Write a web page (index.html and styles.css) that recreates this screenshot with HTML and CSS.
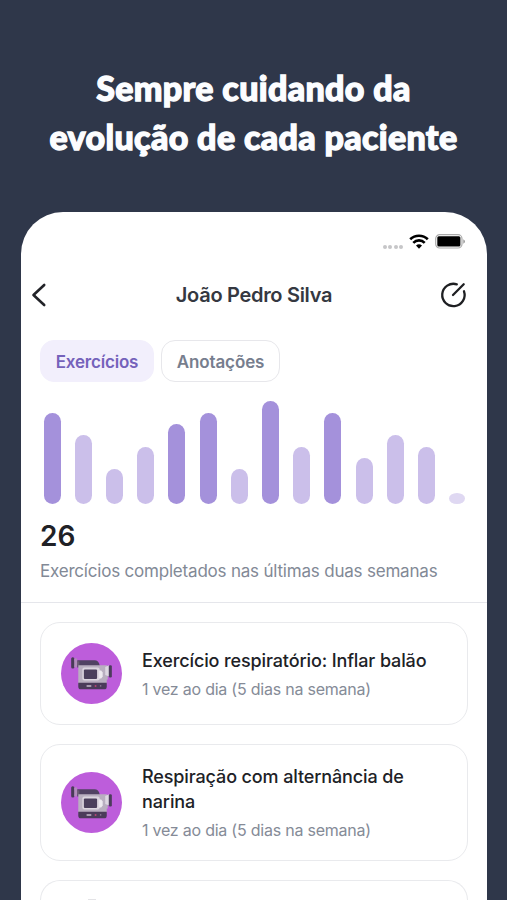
FILE: index.html
```html
<!DOCTYPE html>
<html lang="pt-BR">
<head>
<meta charset="utf-8">
<title>João Pedro Silva</title>
<link rel="stylesheet" href="styles.css">
</head>
<body>
<svg class="defs" aria-hidden="true">
  <symbol id="camera" viewBox="0 0 60 60">
    <circle cx="30" cy="30" r="30" fill="#bd5ddb"/>
    <path d="M16 17h17q4 0 5 5v2H16z" fill="#514263"/>
    <rect x="12" y="18" width="6" height="4" fill="#6c5b75"/>
    <rect x="10" y="14" width="3.200" height="11" rx="1.500" fill="#493b58"/>
    <rect x="13" y="15" width="2.800" height="9" rx="1" fill="#b18bbb"/>
    <path d="M17 22h27q2 0 2 1v13h-1v4H17z" fill="#b9afc0"/>
    <rect x="21" y="24" width="17" height="13" rx="2" fill="#dcd5df"/>
    <rect x="22.500" y="26" width="13" height="9.500" rx="1" fill="#4b3e5c"/>
    <path d="M37.500 27h2l1.500 2v4L39.500 35h-2z" fill="#eeeaf0"/>
    <path d="M43.500 23.500l4-1.500v11l-4-1.500z" fill="#ded8e2"/>
    <rect x="47" y="22" width="3" height="12" rx="1.200" fill="#4b3c5b"/>
    <path d="M17 39h28v4q0 2.500-2.500 2.500h-23Q17 45.500 17 43z" fill="#4b3b5a"/>
    <rect x="25" y="41.500" width="5" height="1.500" rx=".7" fill="#c8bdcd"/>
    <circle cx="34" cy="42.200" r="1" fill="#b74673"/>
    <circle cx="39" cy="42.200" r=".8" fill="#8d7898"/>
  </symbol>
</svg>
<h1 class="headline"><span>Sempre cuidando da</span><span>evolução de cada paciente</span></h1>
<main class="phone">
  <div class="status">
    <div class="dots"><i></i><i></i><i></i><i></i></div>
    <svg class="wifi" viewBox="0 0 20 15" fill="none" stroke="#000" stroke-width="2.600">
      <path d="M1.200 5.300a12.600 12.600 0 0 1 17.600 0M4.300 8.800a8 8 0 0 1 11.400 0"/>
      <path d="M7 11.600a4.300 4.300 0 0 1 6 0L10 14.700z" fill="#000" stroke="none"/>
    </svg>
    <svg class="battery" viewBox="0 0 30 15">
      <rect x=".7" y=".7" width="26.300" height="13.300" rx="4" fill="#fff" stroke="#aaa" stroke-width="1.200"/>
      <rect x="2.300" y="2.300" width="23.100" height="10.100" rx="1.500"/>
      <path d="M28.300 5.200q1.700 1 1.700 2.300t-1.700 2.300z" fill="#999"/>
    </svg>
  </div>
  <header class="nav">
    <svg class="back" viewBox="0 0 16 24" fill="none" stroke="#222328" stroke-width="2.600" stroke-linecap="round" stroke-linejoin="round"><path d="M13.200 2L2.500 12l10.700 10"/></svg>
    <h2>João Pedro Silva</h2>
    <svg class="edit" viewBox="0 0 28 28" fill="none" stroke="#1e1f22" stroke-width="2.300" stroke-linecap="round"><path d="M16.800 3.300A11.200 11.200 0 1 0 24 10.300M13 14L23.700 3.300"/></svg>
  </header>
  <nav class="tabs"><button class="tab active">Exercícios</button><button class="tab">Anotações</button></nav>
  <section class="summary">
    <div class="chart">
      <i class="bar high h8"></i><i class="bar h6"></i><i class="bar h3"></i><i class="bar h5"></i><i class="bar high h7"></i><i class="bar high h8"></i><i class="bar h3"></i><i class="bar high h9"></i><i class="bar h5"></i><i class="bar high h8"></i><i class="bar h4"></i><i class="bar h6"></i><i class="bar h5"></i><i class="bar h1"></i>
    </div>
    <div class="total">26</div>
    <p class="caption">Exercícios completados nas últimas duas semanas</p>
  </section>
  <section class="list">
    <article class="card">
      <svg class="avatar"><use href="#camera"/></svg>
      <div class="info"><h3>Exercício respiratório: Inflar balão</h3><p>1 vez ao dia (5 dias na semana)</p></div>
    </article>
    <article class="card tall">
      <svg class="avatar"><use href="#camera"/></svg>
      <div class="info"><h3>Respiração com alternância de narina</h3><p>1 vez ao dia (5 dias na semana)</p></div>
    </article>
    <article class="card next"><i class="peek"></i></article>
  </section>
</main>
</body>
</html>
```
FILE: styles.css
```css
* { box-sizing: border-box; }
body { margin: 0; height: 900px; overflow: hidden; background: #2f374a; font-family: Inter, "Liberation Sans", sans-serif; color: #202126; }
.defs { display: none; }
h1, h2, h3, p { margin: 0; }
.headline { height: 212px; padding-top: 63px; text-align: center; color: #fcfdff; font: 900 34px/49px Lato, sans-serif; letter-spacing: .35px; -webkit-text-stroke: 1.300px #fcfdff; }
.headline span { display: block; white-space: nowrap; }
.phone { width: 466px; height: 688px; margin-left: 21px; background: #fff; border-radius: 42px 42px 0 0; overflow: hidden; }
.status { height: 58px; padding: 22px 22px 0 0; display: flex; justify-content: flex-end; align-items: flex-start; }
.dots { display: flex; gap: 1.500px; margin: 11px 6px 0 0; }
.dots i { width: 4px; height: 4px; border-radius: 2px; background: #c6c6c8; }
.wifi { width: 20px; height: 15px; margin-right: 6px; }
.battery { width: 30px; height: 15px; }
.nav { height: 50px; padding: 0 19px 0 10px; display: flex; align-items: center; justify-content: space-between; }
.nav h2 { font-size: 20px; line-height: 28px; font-weight: 600; color: #353841; letter-spacing: -.3px; margin-left: 21px; }
.back { width: 16px; height: 24px; }
.edit { width: 28px; height: 28px; }
.tabs { display: flex; gap: 7px; margin: 20px 0 0 19px; }
.tab { height: 42px; width: 119px; padding: 1px 0 0; border: 1px solid #e7e7eb; border-radius: 14px; background: #fff; color: #777e8e; font: 600 17px/24px Inter, sans-serif; letter-spacing: -.1px; }
.tab.active { width: 114px; border-color: #f2effc; background: #f2effc; color: #7562bb; letter-spacing: -.2px; }
.summary { height: 221px; padding: 19px 20px 0 19px; border-bottom: 1px solid #e5e6eb; }
.chart { height: 102.500px; display: flex; align-items: flex-end; gap: 14.230px; padding-left: 3.500px; }
.bar { width: 17px; flex: none; border-radius: 9px; background: #cbbfea; }
.bar.high { background: #a491db; }
.h9 { height: 102.500px; } .h8 { height: 91px; } .h7 { height: 80px; } .h6 { height: 68.500px; } .h5 { height: 57px; } .h4 { height: 45.500px; } .h3 { height: 34.500px; }
.bar.h1 { height: 11px; width: 16px; border-radius: 50%; background: #dfd8f2; }
.total { margin-top: 15px; font-size: 28px; font-weight: 600; line-height: 34px; }
.caption { margin-top: 6px; font-size: 17px; line-height: 24px; letter-spacing: -.2px; color: #828996; white-space: nowrap; }
.list { padding: 19px 19px 0 19px; }
.card { display: flex; align-items: center; gap: 20px; height: 103px; padding: 0 20px; border: 1px solid #e9eaed; border-radius: 20px; margin-bottom: 19px; }
.card.tall { height: 117px; }
.avatar { width: 61px; height: 61px; flex: none; }
.info { flex: 1; min-width: 0; padding-top: 1px; }
.info h3 { font-size: 18px; font-weight: 500; line-height: 25px; letter-spacing: -.12px; }
.info p { margin-top: 4px; font-size: 16px; line-height: 24px; color: #858b97; letter-spacing: -.23px; }
.card.next { height: 20px; border-bottom: 0; border-radius: 20px 20px 0 0; margin: 0; align-items: flex-end; padding: 0 0 0 47px; }
.peek { width: 8px; height: 1px; background: #e3e3e6; }
```
